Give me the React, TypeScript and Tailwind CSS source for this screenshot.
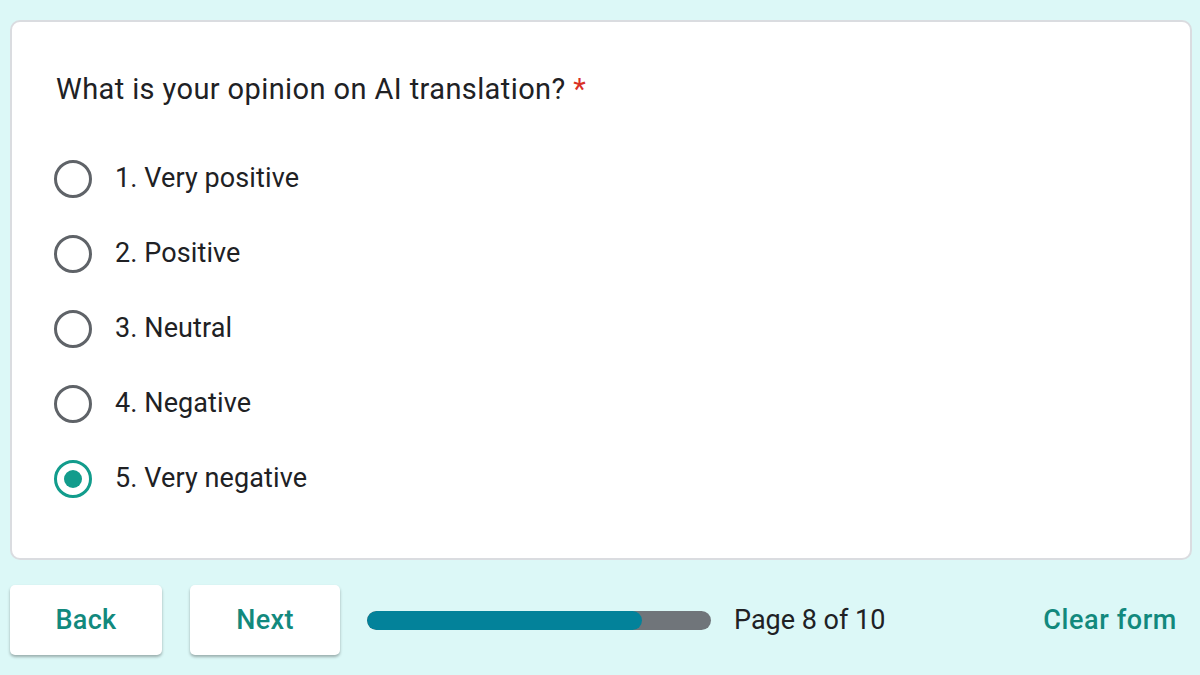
import React from "react";

const options = ["1. Very positive", "2. Positive", "3. Neutral", "4. Negative", "5. Very negative"];

export default function App() {
  const selected = 4;
  return (
    <div
      className="w-[1200px] h-[675px] bg-[#dcf8f7] overflow-hidden pt-[20px] px-[10px]"
      style={{ fontFamily: "Roboto, 'Noto Sans', sans-serif" }}
    >
      <div className="w-[1182px] h-[540px] bg-white rounded-[10px] border-2 border-[#dadce0] pt-[48px] pl-[42px]">
        <div className="ml-[2px] text-[29px] leading-[38px] tracking-[0.4px] text-[#202124]">
          What is your opinion on AI translation? <span className="text-[#d93025]">*</span>
        </div>
        <div className="mt-[33px] flex flex-col">
          {options.map((o, i) => (
            <div key={o} className="h-[75px] flex items-center">
              {i === selected ? (
                <div className="w-[38px] h-[38px] rounded-full border-[3px] border-[#129c8c] flex items-center justify-center">
                  <div className="w-[18px] h-[18px] rounded-full bg-[#129c8c]" />
                </div>
              ) : (
                <div className="w-[38px] h-[38px] rounded-full border-[3px] border-[#5f6368]" />
              )}
              <span className="ml-[23px] text-[27px] tracking-[0.1px] text-[#202124]">{o}</span>
            </div>
          ))}
        </div>
      </div>
      <div className="mt-[25px] flex items-center">
        <button className="w-[152px] h-[70px] bg-white rounded-[5px] shadow-[0_2px_3px_rgba(0,0,0,0.3)] text-[27px] font-medium tracking-[0.3px] text-[#12897d]">
          Back
        </button>
        <button className="ml-[28px] w-[150px] h-[70px] bg-white rounded-[5px] shadow-[0_2px_3px_rgba(0,0,0,0.3)] text-[27px] font-medium tracking-[0.3px] text-[#12897d]">
          Next
        </button>
        <div className="ml-[27px] w-[344px] h-[19px] rounded-full bg-[#70757a] overflow-hidden">
          <div className="h-full w-[80%] rounded-full bg-[#03829a]" />
        </div>
        <span className="ml-[23px] text-[27px] text-[#202124]">Page 8 of 10</span>
        <span className="ml-auto mr-[13px] text-[27px] font-medium text-[#12897d] tracking-[0.6px]">Clear form</span>
      </div>
    </div>
  );
}
